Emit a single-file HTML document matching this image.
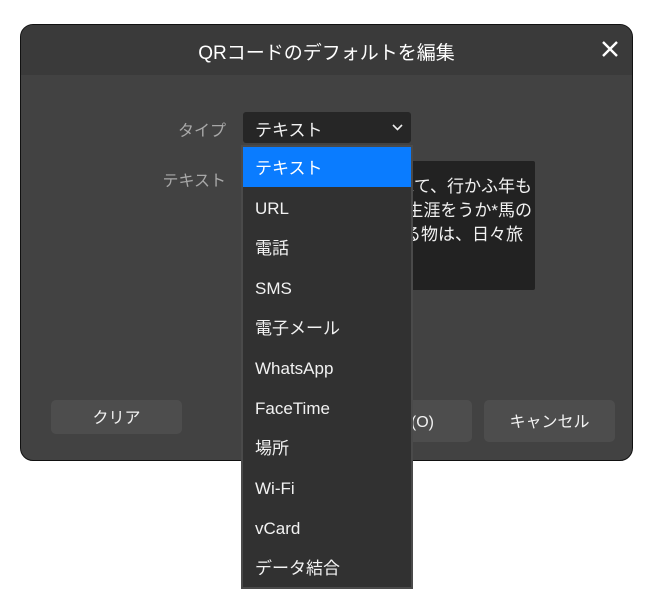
<!DOCTYPE html>
<html><head><meta charset="utf-8"><style>
*{margin:0;padding:0;box-sizing:border-box}
body{width:652px;height:595px;background:#fff;position:relative;overflow:hidden;font-family:"Liberation Sans","Noto Sans CJK JP",sans-serif;color:#f2f2f2}
.dlg{position:absolute;left:20px;top:24px;width:613px;height:437px;background:#424242;border:1.5px solid #111;border-radius:13px;overflow:hidden}
.tb{position:absolute;left:0;top:0;right:0;height:50px;background:#3a3a3a}
.title{position:absolute;left:0;right:0;top:13px;text-align:center;font-size:19px;color:#fff}
.x{position:absolute;right:14px;top:16px}
.lbl{position:absolute;font-size:16px;color:#a8a8a8;text-align:right;width:100px}
.sel{position:absolute;left:243px;top:112px;width:168px;height:31px;background:#262626;border-radius:3px;font-size:17px;padding:4px 12px}
.ta{position:absolute;left:300px;top:161px;width:235px;height:129px;background:#222;border-radius:2px;overflow:hidden}
.ta div{position:absolute;right:3px;font-size:17px;white-space:nowrap}
.btn{position:absolute;background:#4d4d4d;border-radius:5px;font-size:16px;text-align:center;color:#f2f2f2}
.pop{position:absolute;left:241px;top:145px;width:172px;height:444px;background:#313131;border:2px solid #4a4a4a}
.it{height:40px;font-size:17px;padding-left:12px;line-height:44px}
.it.s{background:#0a7cff;color:#fff}
</style></head><body>
<div class="dlg">
 <div class="tb"></div>
 <div class="title">QRコードのデフォルトを編集</div>
 <svg class="x" width="16" height="16" viewBox="0 0 16 16"><path d="M1 1L15 15M15 1L1 15" stroke="#fff" stroke-width="2.4"/></svg>
</div>
<div class="lbl" style="left:126px;top:117px">タイプ</div>
<div class="lbl" style="left:126px;top:167px">テキスト</div>
<div class="sel">テキスト<svg style="position:absolute;right:8px;top:12px" width="11" height="7" viewBox="0 0 11 7"><path d="M1 1L5.5 5.5L10 1" stroke="#eee" stroke-width="1.6" fill="none"/></svg></div>
<div class="ta">
 <div style="top:11px">旅人也。舟の上に生涯を浮べて、行かふ年も</div>
 <div style="top:35px">百代の過客にして、日々旅にして生涯をうか*馬の</div>
 <div style="top:59px;right:12px">口とらえて老をむかふる物は、日々旅</div>
</div>
<div class="btn" style="left:51px;top:400px;width:131px;height:34px;line-height:38px">クリア</div>
<div class="btn" style="left:340px;top:400px;width:132px;height:42px;line-height:46px;text-align:right;padding-right:38px">OK(O)</div>
<div class="btn" style="left:484px;top:400px;width:131px;height:42px;line-height:46px">キャンセル</div>
<div class="pop">
 <div class="it s">テキスト</div>
 <div class="it">URL</div>
 <div class="it">電話</div>
 <div class="it">SMS</div>
 <div class="it">電子メール</div>
 <div class="it">WhatsApp</div>
 <div class="it">FaceTime</div>
 <div class="it">場所</div>
 <div class="it">Wi-Fi</div>
 <div class="it">vCard</div>
 <div class="it">データ結合</div>
</div>
</body></html>
